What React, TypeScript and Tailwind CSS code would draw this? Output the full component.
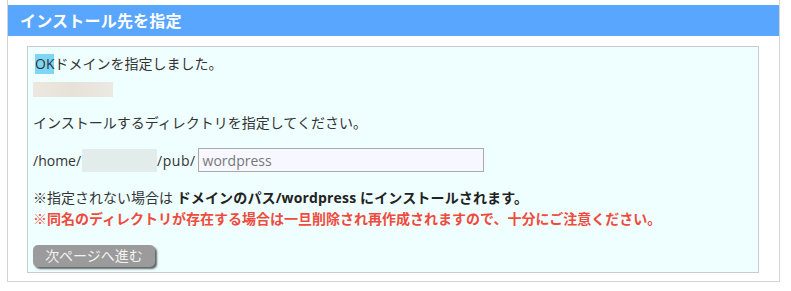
import React from "react";

const font = { fontFamily: '"Open Sans", "Noto Sans CJK JP", sans-serif' };

export default function App() {
  return (
    <div className="w-[791px] h-[291px] bg-white" style={font}>
      {/* Outer panel */}
      <div className="ml-[7px] w-[773px] h-[282px] border-x border-b border-[#d4d4d4] pt-[5px]">
        {/* Header */}
        <div className="h-[31px] bg-[#59a6ff] pl-[12px] pt-[1px] flex items-center text-white font-bold text-[16px] tracking-[0.2px]">
          インストール先を指定
        </div>

        {/* Content box */}
        <div className="mt-[10px] ml-[19px] w-[732px] h-[227px] border border-[#c8cccc] bg-[#efffff] pl-[5px] pt-[7px] text-[14px] text-[#333]">
          <div className="h-[20px] leading-[20px] flex items-center">
            <span className="bg-[#7dd6f5] ml-[2px] h-[20px]">OK</span>
            <span>ドメインを指定しました。</span>
          </div>

          {/* redacted domain */}
          <div className="mt-[8px] h-[15px] w-[80px] bg-gradient-to-r from-[#ece8e0] via-[#e6e2da] to-[#ece9e2]" />

          <div className="mt-[16px] h-[20px] leading-[20px]">
            インストールするディレクトリを指定してください。
          </div>

          <div className="mt-[15px] flex items-center h-[24px]">
            <span>/home/</span>
            <span className="ml-[1px] h-[23px] w-[75px] bg-[#e2ecea]" />
            <span className="tracking-[0.5px]">/pub/</span>
            <div className="ml-[2px] w-[286px] h-[24px] border border-[#a9a9a9] bg-[#f7f8ff] pl-[4px] flex items-center text-[#777]">
              wordpress
            </div>
          </div>

          <div className="mt-[15px] h-[21px] leading-[21px]">
            ※指定されない場合は <b className="text-[#222] tracking-[0.15px]">ドメインのパス/wordpress にインストールされます。</b>
          </div>
          <div className="h-[21px] leading-[21px] font-bold text-[#ef4b3d]">
            ※同名のディレクトリが存在する場合は一旦削除され再作成されますので、十分にご注意ください。
          </div>

          <button className="mt-[16px] w-[122px] h-[22px] rounded-[5px] bg-[#9b9b9b] text-[#f2f2f2] text-[14px] leading-[22px] shadow-[2px_2px_2px_rgba(0,0,0,0.6)]">
            次ページへ進む
          </button>
        </div>
      </div>
    </div>
  );
}
